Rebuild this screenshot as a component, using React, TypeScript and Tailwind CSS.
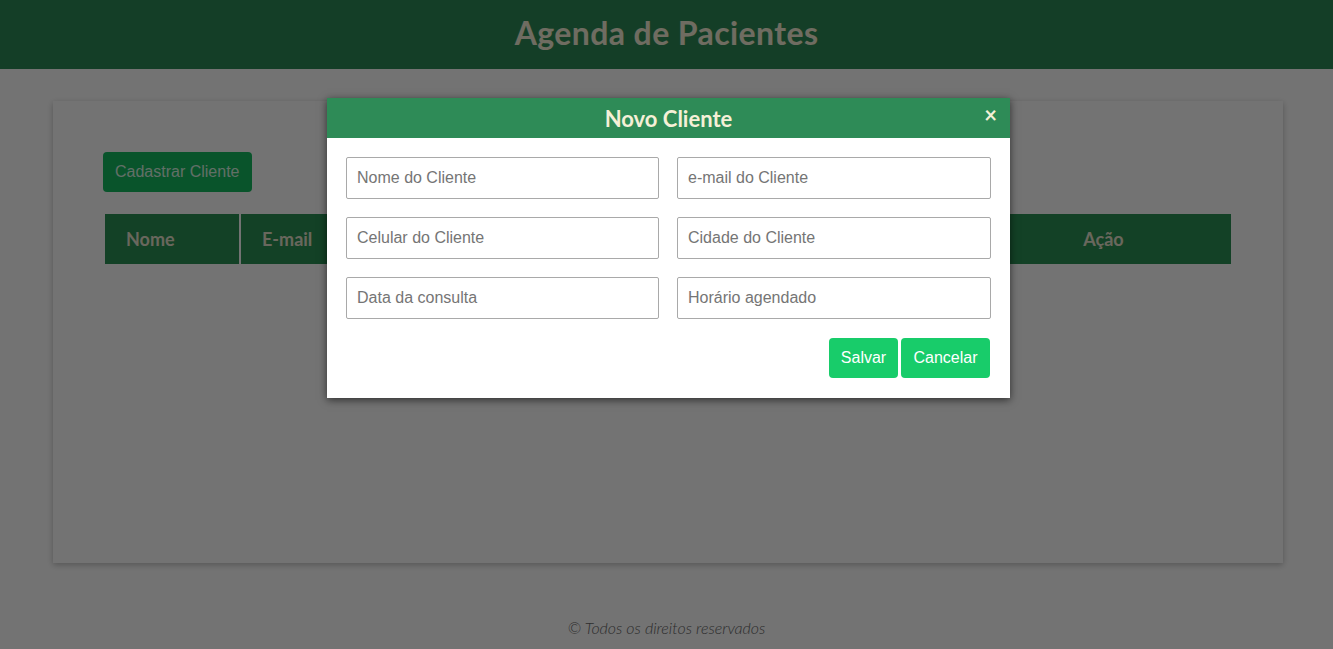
import React from "react";

const colunas = [
  { nome: "Nome", w: "w-[135px]" },
  { nome: "E-mail", w: "w-[180px]" },
  { nome: "Celular", w: "w-[150px]" },
  { nome: "Cidade", w: "w-[150px]" },
  { nome: "Data", w: "w-[130px]" },
  { nome: "Horário", w: "w-[125px]" },
  { nome: "Ação", w: "" },
];

const campos = [
  "Nome do Cliente",
  "e-mail do Cliente",
  "Celular do Cliente",
  "Cidade do Cliente",
  "Data da consulta",
  "Horário agendado",
];

const App = () => {
  return (
    <div className="relative min-h-[649px] bg-white font-['Lato',sans-serif] flex flex-col">
      <header className="h-[69px] bg-[#2e8b57] flex items-center justify-center pb-[3px]">
        <h1 className="text-[32px] font-bold text-[#f5f0d7] tracking-[0.4px]">
          Agenda de Pacientes
        </h1>
      </header>

      <main className="pl-[53px] pr-[50px] pt-[32px]">
        <div className="h-[462px] bg-white shadow-[0_2px_6px_rgba(0,0,0,0.25)] px-[50px] pt-[51px]">
          <button className="h-[40px] px-[12px] rounded-[4px] bg-[#15ba60] text-[#d9f5e3] text-[16px] font-['Liberation_Sans',sans-serif]">
            Cadastrar Cliente
          </button>
          <table className="mt-[22px] ml-[2px] w-[1126px] border-collapse">
            <thead>
              <tr>
                {colunas.map((c, idx) => (
                  <th
                    key={idx}
                    className={`${c.w} h-[50px] bg-[#2b9156] text-[#e8e4cf] text-[18px] font-bold border-l-2 border-white first:border-l-0 ${
                      c.nome === "Ação" ? "text-center" : "text-left pl-[21px]"
                    }`}
                  >
                    {c.nome}
                  </th>
                ))}
              </tr>
            </thead>
            <tbody></tbody>
          </table>
        </div>
      </main>

      <footer className="mt-auto pb-[12px] pt-[53px] text-center text-[16px] italic font-light text-[#666]">
        © Todos os direitos reservados
      </footer>

      {/* modal */}
      <div className="absolute inset-0 bg-black/55">
        <div className="absolute left-[327px] top-[98px] w-[683px] bg-white shadow-[0_2px_8px_rgba(0,0,0,0.6)]">
          <div className="h-[40px] bg-[#2e8b57] flex items-center justify-center relative">
            <h2 className="text-[22px] font-bold text-[#f5f0d7]">Novo Cliente</h2>
            <button className="absolute right-[13px] top-[6px] text-[#f5f0d7] text-[22px] font-bold leading-none">
              ×
            </button>
          </div>
          <div className="px-[19px] pt-[19px] pb-[20px]">
            <div className="grid grid-cols-[313px_314px] gap-x-[18px] gap-y-[18px]">
              {campos.map((p, idx) => (
                <input
                  key={idx}
                  placeholder={p}
                  className="h-[42px] border border-[#a9a9a9] rounded-[2px] px-[10px] text-[16px] font-['Liberation_Sans',sans-serif] placeholder:text-[#757575] outline-none"
                />
              ))}
            </div>
            <div className="flex justify-end gap-[3px] mt-[19px] pr-[1px]">
              <button className="h-[40px] w-[69px] rounded-[4px] bg-[#18cc6a] text-white text-[16px] font-['Liberation_Sans',sans-serif]">
                Salvar
              </button>
              <button className="h-[40px] w-[89px] rounded-[4px] bg-[#18cc6a] text-white text-[16px] font-['Liberation_Sans',sans-serif]">
                Cancelar
              </button>
            </div>
          </div>
        </div>
      </div>
    </div>
  );
};

export default App;
